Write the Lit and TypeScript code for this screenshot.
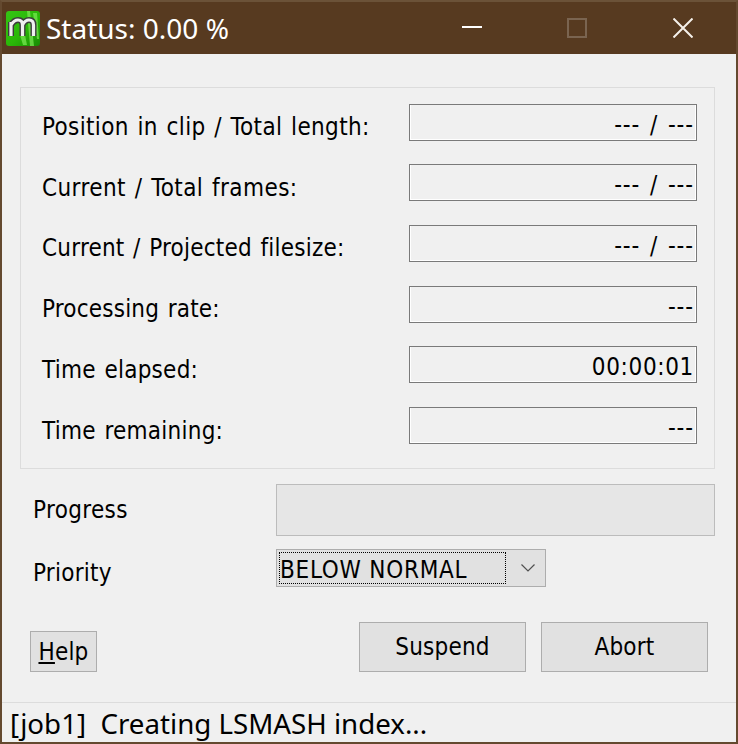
import { LitElement, html, css, svg } from "lit";
import { customElement } from "lit/decorators.js";

const rows: [string, string, boolean][] = [
  ["Position in clip / Total length:", "--- / ---", false],
  ["Current / Total frames:", "--- / ---", false],
  ["Current / Projected filesize:", "--- / ---", false],
  ["Processing rate:", "---", false],
  ["Time elapsed:", "00:00:01", true],
  ["Time remaining:", "---", false],
];

const logo = svg`<svg class="logo" width="34" height="35" viewBox="0 0 34 35">
  <defs><linearGradient id="g" x1="0" y1="0" x2="1" y2="1">
    <stop offset="0" stop-color="#35c414"/><stop offset="0.55" stop-color="#2ab808"/><stop offset="1" stop-color="#188a04"/></linearGradient></defs>
  <rect x="0" y="0" width="34" height="35" rx="3" fill="url(#g)"/>
  <path d="M21 0 L24 0 L28 35 L24 35Z M27 2 L31 2 L33 28 L31 28Z M14 24 L19 24 L21 34 L17 34Z" fill="#78e552" opacity=".75"/>
  <path d="M5 25 V11 M5 14 Q8 9 12 9 Q16.500 9 16.500 14 V25 M16.500 14 Q19 9 23 9 Q27.500 9 27.500 14 V25" fill="none" stroke="#3c3c3c" stroke-width="6"/>
  <path d="M5 25 V11 M5 14 Q8 9 12 9 Q16.500 9 16.500 14 V25 M16.500 14 Q19 9 23 9 Q27.500 9 27.500 14 V25" fill="none" stroke="#efefef" stroke-width="3.200"/>
</svg>`;

@customElement("app-root")
export class AppRoot extends LitElement {
  static styles = css`
    :host {
      display: block;
      width: 738px;
      height: 744px;
      font-family: "DejaVu Sans", sans-serif;
      font-stretch: condensed;
      font-size: 24px;
      color: #000;
    }
    * { box-sizing: border-box; }
    .window {
      width: 738px;
      height: 744px;
      display: flex;
      flex-direction: column;
      background: #f0f0f0;
      border: 2px solid #64492f;
      border-top-color: #6b5238;
    }
    .title {
      height: 52px;
      flex: none;
      display: flex;
      align-items: center;
      background: #573a20;
      color: #fff;
      padding-left: 4px;
    }
    .logo { flex: none; margin-right: 6px; }
    .title-text {
      font-family: "Noto Sans", sans-serif;
      font-stretch: normal;
      font-size: 28px;
      line-height: 52px;
      flex: 1;
      white-space: pre;
    }
    .ctl { flex: none; display: block; }
    .ctl-min { margin-right: 85px; margin-top: -3px; }
    .ctl-max { margin-right: 86px; }
    .ctl-close { margin-right: 43px; }
    .body { flex: 1; display: flex; flex-direction: column; padding: 33px 21px 0 18px; min-height: 0; }
    .group {
      width: 695px;
      height: 382px;
      flex: none;
      border: 1px solid #dcdcdc;
      padding: 15.8px 17px 0 21px;
      display: flex;
      flex-direction: column;
      gap: 23.6px;
    }
    .row { display: flex; align-items: center; justify-content: space-between; height: 37px; flex: none; }
    .row-label { padding-top: 10px; white-space: pre; letter-spacing: 0.25px; word-spacing: 1.5px; }
    .row:nth-child(1) .row-label { letter-spacing: 0.35px; }
    .row:nth-child(2) .row-label { letter-spacing: 0.42px; }
    .row:nth-child(3) .row-label { letter-spacing: 0.22px; }
    .row:nth-child(4) .row-label { letter-spacing: 0.19px; }
    .row:nth-child(6) .row-label { padding-top: 11px; }
    .field {
      width: 288px;
      height: 37px;
      border: 1px solid #7a7a7a;
      box-shadow: inset 1px -1px 0 #fff, inset -1px 0 0 #fff;
      text-align: right;
      padding-right: 2px;
      line-height: 41px;
      white-space: pre;
    }
    .dash { word-spacing: 2px; letter-spacing: 0.9px; }
    .time { letter-spacing: 0.65px; }
    .ctrl-row { display: flex; align-items: center; flex: none; padding-left: 13px; }
    .ctrl-label { width: 243px; flex: none; }
    .progress-row { margin-top: 15px; height: 52px; }
    .progress-row .ctrl-label { letter-spacing: 0.35px; }
    .progress { width: 439px; height: 52px; background: #e6e6e6; border: 1px solid #bcbcbc; }
    .priority-row { margin-top: 13px; height: 38px; }
    .priority-row .ctrl-label { padding-top: 10px; letter-spacing: 0.25px; }
    .select {
      width: 270px;
      height: 38px;
      background: #e1e1e1;
      border: 1px solid #adadad;
      display: flex;
      align-items: center;
      padding: 2px;
    }
    .select-value {
      width: 227px;
      height: 32px;
      outline: 1px dotted #000;
      outline-offset: -1px;
      line-height: 36px;
      padding-left: 1px;
      white-space: pre;
      letter-spacing: 0.75px;
    }
    .chev { margin-left: 15px; flex: none; display: block; }
    .actions { display: flex; align-items: flex-end; flex: none; height: 50px; margin-top: 35px; padding-left: 10px; }
    .btn {
      height: 50px;
      width: 167px;
      background: #e1e1e1;
      border: 1px solid #adadad;
      display: flex;
      align-items: center;
      justify-content: center;
      flex: none;
      letter-spacing: 0.2px;
    }
    .help { width: 67px; height: 41px; margin-right: 262px; }
    .suspend { margin-right: 15px; }
    .u { text-decoration: underline; }
    .status {
      height: 40px;
      margin: 30px -21px 0 -18px;
      flex: none;
      border-top: 1px solid #dcdcdc;
      padding-left: 8px;
      font-family: "Noto Sans", sans-serif;
      font-stretch: normal;
      font-size: 27.700px;
      line-height: 40px;
      white-space: pre;
    }
  `;

  render() {
    return html`<div class="window">
      <div class="title">
        ${logo}
        <span class="title-text">Status: 0.00 %</span>
        <svg class="ctl ctl-min" width="20" height="2" viewBox="0 0 20 2"><rect width="20" height="2" fill="#fff"/></svg>
        <svg class="ctl ctl-max" width="20" height="20" viewBox="0 0 20 20"><rect x="1" y="1" width="18" height="18" fill="none" stroke="#7a6450" stroke-width="2"/></svg>
        <svg class="ctl ctl-close" width="20" height="20" viewBox="0 0 20 20"><path d="M0.500 0.500L19.500 19.500M19.500 0.500L0.500 19.500" stroke="#f5f0ea" stroke-width="2"/></svg>
      </div>
      <div class="body">
        <div class="group">
          ${rows.map(([l, v, t]) => html`<div class="row"><span class="row-label">${l}</span><div class="field ${t ? "time" : "dash"}">${v}</div></div>`)}
        </div>
        <div class="ctrl-row progress-row"><span class="ctrl-label">Progress</span><div class="progress"></div></div>
        <div class="ctrl-row priority-row"><span class="ctrl-label">Priority</span>
          <div class="select"><div class="select-value">BELOW NORMAL</div>
            <svg class="chev" width="14" height="8" viewBox="0 0 14 8"><path d="M0.500 0.500L7 7L13.500 0.500" fill="none" stroke="#505050" stroke-width="1.200"/></svg>
          </div>
        </div>
        <div class="actions">
          <div class="btn help"><span><span class="u">H</span>elp</span></div>
          <div class="btn suspend">Suspend</div>
          <div class="btn">Abort</div>
        </div>
        <div class="status">[job1]  Creating LSMASH index...</div>
      </div>
    </div>`;
  }
}
